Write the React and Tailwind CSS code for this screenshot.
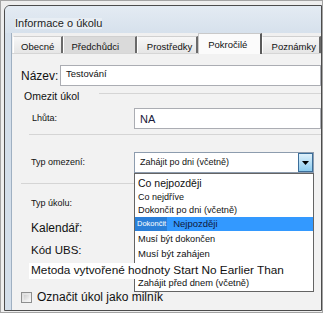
import React from "react";

const F = { fontFamily: '"Liberation Sans", Arial, sans-serif' };

function Tab({ w, label, selected, gray, textPl }) {
  if (selected) {
    return (
      <div
        className="relative z-10 h-[21px] border-l border-t border-[#c9c9c9] border-r-2 border-r-[#5a5a5a] bg-[#fbfbfb] text-[9.5px] leading-none text-[#111]"
        style={{ width: w }}
      >
        <div className="pt-[6px]" style={{ paddingLeft: textPl }}>
          {label}
        </div>
      </div>
    );
  }
  return (
    <div
      className={`mt-[3px] h-[17px] border-l border-l-white border-t border-t-[#d0d0d0] border-r-2 border-r-[#6a6a6a] text-[9.5px] leading-none text-[#111] ${
        gray ? "bg-[#dadada]" : "bg-gradient-to-b from-[#f7f7f7] to-[#e6e6e6]"
      }`}
      style={{ width: w }}
    >
      <div className="pt-[5px]" style={{ paddingLeft: textPl }}>
        {label}
      </div>
    </div>
  );
}

export default function App() {
  return (
    <div
      className="w-[323px] h-[313px] border border-[#a4a4a4] bg-[#eeeeee] pt-[4px] pl-[3px] pb-[1px] overflow-hidden"
      style={F}
    >
      <div className="w-[318px] h-[306px] border border-[#4c4c4c] rounded-tl-[6px] bg-[#d3deea] flex flex-col overflow-hidden">
        {/* title bar */}
        <div className="h-[27px] shrink-0 flex items-end pl-[10px] pb-[4px] bg-gradient-to-b from-[#e4ebf3] to-[#d6e1ec]">
          <span className="text-[11px] leading-none text-[#1e1e1e] bg-[#e8eef4]">
            Informace o úkolu
          </span>
        </div>
        {/* client area */}
        <div className="flex-1 flex ml-[6px] border-l border-[#9fb0c2] bg-[#f0f0f0] flex-col">
          {/* tab strip */}
          <div className="h-[20px] shrink-0 flex pl-[1px]">
            <Tab w={50} label="Obecné" textPl={7} />
            <Tab w={75} label="Předchůdci" gray textPl={8} />
            <Tab w={62} label="Prostředky" textPl={9} />
            <Tab w={64} label="Pokročilé" selected textPl={9} />
            <Tab w={60} label="Poznámky" textPl={9} />
          </div>
          {/* panel */}
          <div className="relative flex-1 border-t border-[#d6d6d6] bg-[#f2f2f2] flex flex-col">
            {/* Název */}
            <div className="mt-[11px] h-[21px] flex items-center">
              <div className="pl-[9px] w-[48px] text-[12px] leading-none text-[#111]">Název:</div>
              <div className="flex-1 h-[21px] border border-[#abadb3] bg-white pl-[5px] pt-[3px] text-[9.5px] leading-none text-[#111]">
                Testování
              </div>
            </div>
            {/* Omezit úkol */}
            <div className="mt-[2px] h-[16px] flex items-center pl-[12px]">
              <span className="text-[10.5px] leading-none text-[#111]">Omezit úkol</span>
              <div className="flex-1 ml-[20px] h-px bg-[#d5d5d5] -mt-[5px]" />
            </div>
            {/* Lhůta */}
            <div className="mt-[4px] h-[21px] flex items-center">
              <div className="pl-[20px] w-[122px] text-[9px] leading-none text-[#111]">Lhůta:</div>
              <div className="flex-1 h-[21px] border border-[#abadb3] bg-white pl-[5px] pt-[5px] text-[11px] leading-none text-[#1a1a3a]">
                NA
              </div>
            </div>
            <div className="mt-[5px] ml-[17px] h-px bg-[#d5d5d5]" />
            {/* Typ omezení */}
            <div className="mt-[17px] h-[21px] flex items-center">
              <div className="pl-[19px] w-[122px] text-[9px] leading-none text-[#111]">Typ omezení:</div>
              <div className="w-[180px] h-[21px] flex border border-[#8d9cae] bg-white">
                <div className="flex-1 pl-[5px] pt-[5px] text-[9px] leading-none text-[#111]">
                  Zahájit po dni (včetně)
                </div>
                <div className="w-[15px] h-full border border-[#3c6e9a] bg-gradient-to-b from-[#dff1fb] to-[#8ccbee] flex items-center justify-center">
                  <svg width="7" height="4" viewBox="0 0 7 4">
                    <path d="M0 0 H7 L3.5 4 Z" fill="#000" />
                  </svg>
                </div>
              </div>
            </div>
            <div className="mt-[10px] ml-[9px] w-[113px] h-px bg-[#d5d5d5]" />
            {/* Typ úkolu */}
            <div className="mt-[11px] h-[16px] flex items-center pl-[19px] text-[9px] leading-none text-[#111]">
              Typ úkolu:
            </div>
            <div className="mt-[9px] h-[16px] flex items-center pl-[19px] text-[12px] leading-none text-[#111]">
              Kalendář:
            </div>
            <div className="mt-[7px] h-[16px] flex items-center pl-[19px] text-[11.5px] leading-none text-[#111]">
              Kód UBS:
            </div>
            <div className="relative z-20 mt-[4px] h-[16px] flex pl-[17px]">
              <span className="h-[16px] bg-white pl-[2px] pr-[4px] pt-[2px] text-[11.8px] leading-none text-[#111]">
                Metoda vytvořené hodnoty Start No Earlier Than
              </span>
            </div>
            {/* checkbox */}
            <div className="mt-[10px] h-[16px] flex items-center pl-[9px]">
              <div className="w-[11px] h-[11px] border border-[#8e8f8f] bg-gradient-to-br from-[#dcdcdc] to-[#f8f8f8] p-[2px]">
                <div className="w-full h-full bg-gradient-to-br from-[#cfcfcf] to-[#f3f3f3]" />
              </div>
              <span className="ml-[5px] text-[12px] leading-none text-[#111]">Označit úkol jako milník</span>
            </div>

            {/* dropdown list overlay */}
            <div className="absolute left-[122px] top-[119px] w-[180px] h-[119px] z-10 border border-[#646464] bg-white pt-[2px] flex flex-col">
              <div className="h-[14px] pl-[3px] flex items-center text-[10.5px] leading-none text-[#111]">Co nejpozději</div>
              <div className="h-[14px] pl-[3px] flex items-center text-[9px] leading-none text-[#111]">Co nejdříve</div>
              <div className="h-[13px] pl-[3px] flex items-center text-[9.2px] leading-none text-[#111]">Dokončit po dni (včetně)</div>
              <div className="h-[14px] bg-[#3399ff] flex items-center">
                <span className="h-full bg-[#2a7fd8] pl-[2px] pr-[1px] flex items-center text-[7.5px] leading-none text-white">Dokončit</span>
                <span className="ml-[6px] text-[9.5px] leading-none text-[#10183a]">Nejpozději</span>
              </div>
              <div className="mt-[2px] h-[14px] pl-[3px] flex items-center text-[9.2px] leading-none text-[#111]">Musí být dokončen</div>
              <div className="h-[14px] pl-[3px] flex items-center text-[9.5px] leading-none text-[#111]">Musí být zahájen</div>
              <div className="h-[16px]" />
              <div className="h-[13px] pl-[3px] flex items-center text-[9.3px] leading-none text-[#111]">Zahájit před dnem (včetně)</div>
            </div>
          </div>
        </div>
      </div>
    </div>
  );
}
